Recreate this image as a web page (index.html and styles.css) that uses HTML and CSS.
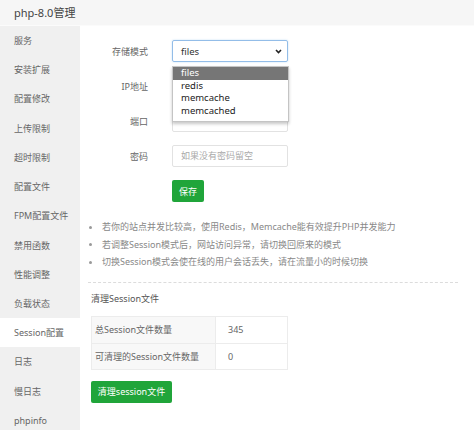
FILE: index.html
```html
<!DOCTYPE html>
<html lang="zh">
<head>
<meta charset="utf-8">
<title>php-8.0管理</title>
<link rel="stylesheet" href="styles.css">
</head>
<body>
<div class="window">
  <div class="titlebar">php-8.0管理</div>
  <div class="main">
    <ul class="sidebar">
      <li>服务</li>
      <li>安装扩展</li>
      <li>配置修改</li>
      <li>上传限制</li>
      <li>超时限制</li>
      <li>配置文件</li>
      <li>FPM配置文件</li>
      <li>禁用函数</li>
      <li>性能调整</li>
      <li>负载状态</li>
      <li class="active">Session配置</li>
      <li>日志</li>
      <li>慢日志</li>
      <li>phpinfo</li>
    </ul>
    <div class="content">
      <div class="form">
        <div class="row">
          <span class="label">存储模式</span>
          <div class="select-wrap">
            <div class="select">
              <span>files</span>
              <svg class="chev" width="7" height="5" viewBox="0 0 7 5"><path d="M1 1 L3.5 3.5 L6 1" fill="none" stroke="#222" stroke-width="1.6"/></svg>
            </div>
            <ul class="dropdown">
              <li class="hl">files</li>
              <li>redis</li>
              <li>memcache</li>
              <li>memcached</li>
            </ul>
          </div>
        </div>
        <div class="row">
          <span class="label">IP地址</span>
          <div class="input"></div>
        </div>
        <div class="row">
          <span class="label">端口</span>
          <div class="input"></div>
        </div>
        <div class="row">
          <span class="label">密码</span>
          <div class="input placeholder">如果没有密码留空</div>
        </div>
        <button class="btn save">保存</button>
      </div>
      <ul class="tips">
        <li>若你的站点并发比较高，使用Redis，Memcache能有效提升PHP并发能力</li>
        <li>若调整Session模式后，网站访问异常，请切换回原来的模式</li>
        <li>切换Session模式会使在线的用户会话丢失，请在流量小的时候切换</li>
      </ul>
      <div class="session">
        <div class="heading">清理Session文件</div>
        <table class="stats">
          <tr><td class="k">总Session文件数量</td><td class="v">345</td></tr>
          <tr><td class="k">可清理的Session文件数量</td><td class="v">0</td></tr>
        </table>
        <button class="btn clean">清理session文件</button>
      </div>
    </div>
  </div>
</div>
</body>
</html>
```

FILE: styles.css
```css
* { box-sizing: border-box; }
html, body { margin: 0; padding: 0; }
body {
  width: 474px;
  height: 430px;
  overflow: hidden;
  background: #fff;
  font-family: "Noto Sans", "Noto Sans CJK SC", sans-serif;
  font-size: 9px;
  color: #666;
}
.window { display: flex; flex-direction: column; height: 430px; }
.titlebar {
  height: 26px;
  line-height: 25px;
  padding-left: 14px;
  font-size: 11px;
  color: #444;
  background: #f6f6f6;
  border-bottom: 1px solid #fbfbfb;
  flex: none;
}
.main { display: flex; flex: 1; min-height: 0; }
.sidebar {
  list-style: none;
  margin: 0;
  padding: 0;
  width: 80px;
  background: #f0f0f0;
  flex: none;
}
.sidebar li {
  height: 29.23px;
  line-height: 29.23px;
  padding-left: 14px;
  color: #666;
  white-space: nowrap;
}
.sidebar li.active { background: #fff; }
.content {
  flex: 1;
  padding: 14px 16px 0 8px;
}
.row {
  display: flex;
  align-items: center;
  height: 22px;
  margin-bottom: 13px;
}
.label {
  width: 60px;
  margin-right: 24px;
  text-align: right;
  color: #666;
}
.select-wrap { position: relative; }
.select {
  width: 116px;
  height: 22px;
  border: 1px solid #93bde8;
  border-radius: 2px;
  display: flex;
  align-items: center;
  justify-content: space-between;
  padding: 0 5px 0 8px;
  font-size: 9.5px;
  color: #333;
  box-shadow: 0 0 2px rgba(102,175,233,0.4);
}
.chev { display: block; }
.dropdown {
  position: absolute;
  left: 0;
  top: 26px;
  width: 117px;
  margin: 0;
  padding: 0 0 4px;
  list-style: none;
  background: #fff;
  border: 1px solid #c4c4c4;
  box-shadow: 0 2px 3px rgba(0,0,0,0.22);
  z-index: 5;
  font-size: 9.5px;
  color: #222;
}
.dropdown li {
  height: 12.5px;
  line-height: 12.5px;
  padding-left: 8px;
}
.dropdown li.hl { background: #767676; color: #fff; }
.input {
  width: 116px;
  height: 22px;
  border: 1px solid #e2e2e2;
  border-radius: 2px;
  padding-left: 8px;
  line-height: 20px;
}
.placeholder { color: #aaa; }
.btn {
  display: block;
  border: none;
  border-radius: 2px;
  background: #20a53a;
  color: #fff;
  font-family: "Noto Sans", "Noto Sans CJK SC", sans-serif;
  font-size: 9px;
  height: 22px;
  padding: 0;
}
.save { width: 32px; margin: 11px 0 0 84px; }
.tips {
  list-style: none;
  margin: 16px 0 0;
  padding: 0 0 11px;
  border-bottom: 1px dashed #dcdcdc;
  color: #888;
}
.tips li {
  position: relative;
  height: 17.5px;
  line-height: 17.5px;
  padding-left: 14px;
  white-space: nowrap;
}
.tips li::before {
  content: "";
  position: absolute;
  left: 1px;
  top: 7.5px;
  width: 3px;
  height: 3px;
  border-radius: 50%;
  background: #999;
}
.session { padding-left: 3px; }
.heading {
  margin-top: 9px;
  height: 14px;
  line-height: 14px;
  color: #555;
}
.stats {
  margin-top: 10px;
  width: 197px;
  border-collapse: collapse;
}
.stats td {
  border: 1px solid #ececec;
  padding: 0 0 0 3px;
  color: #666;
}
.stats tr:first-child td { height: 27px; }
.stats tr:last-child td { height: 26px; }
.stats td.k { width: 124px; background: #f8f8f8; }
.stats td.v { padding-left: 12px; }
.clean { width: 81px; margin-top: 11px; }
```
